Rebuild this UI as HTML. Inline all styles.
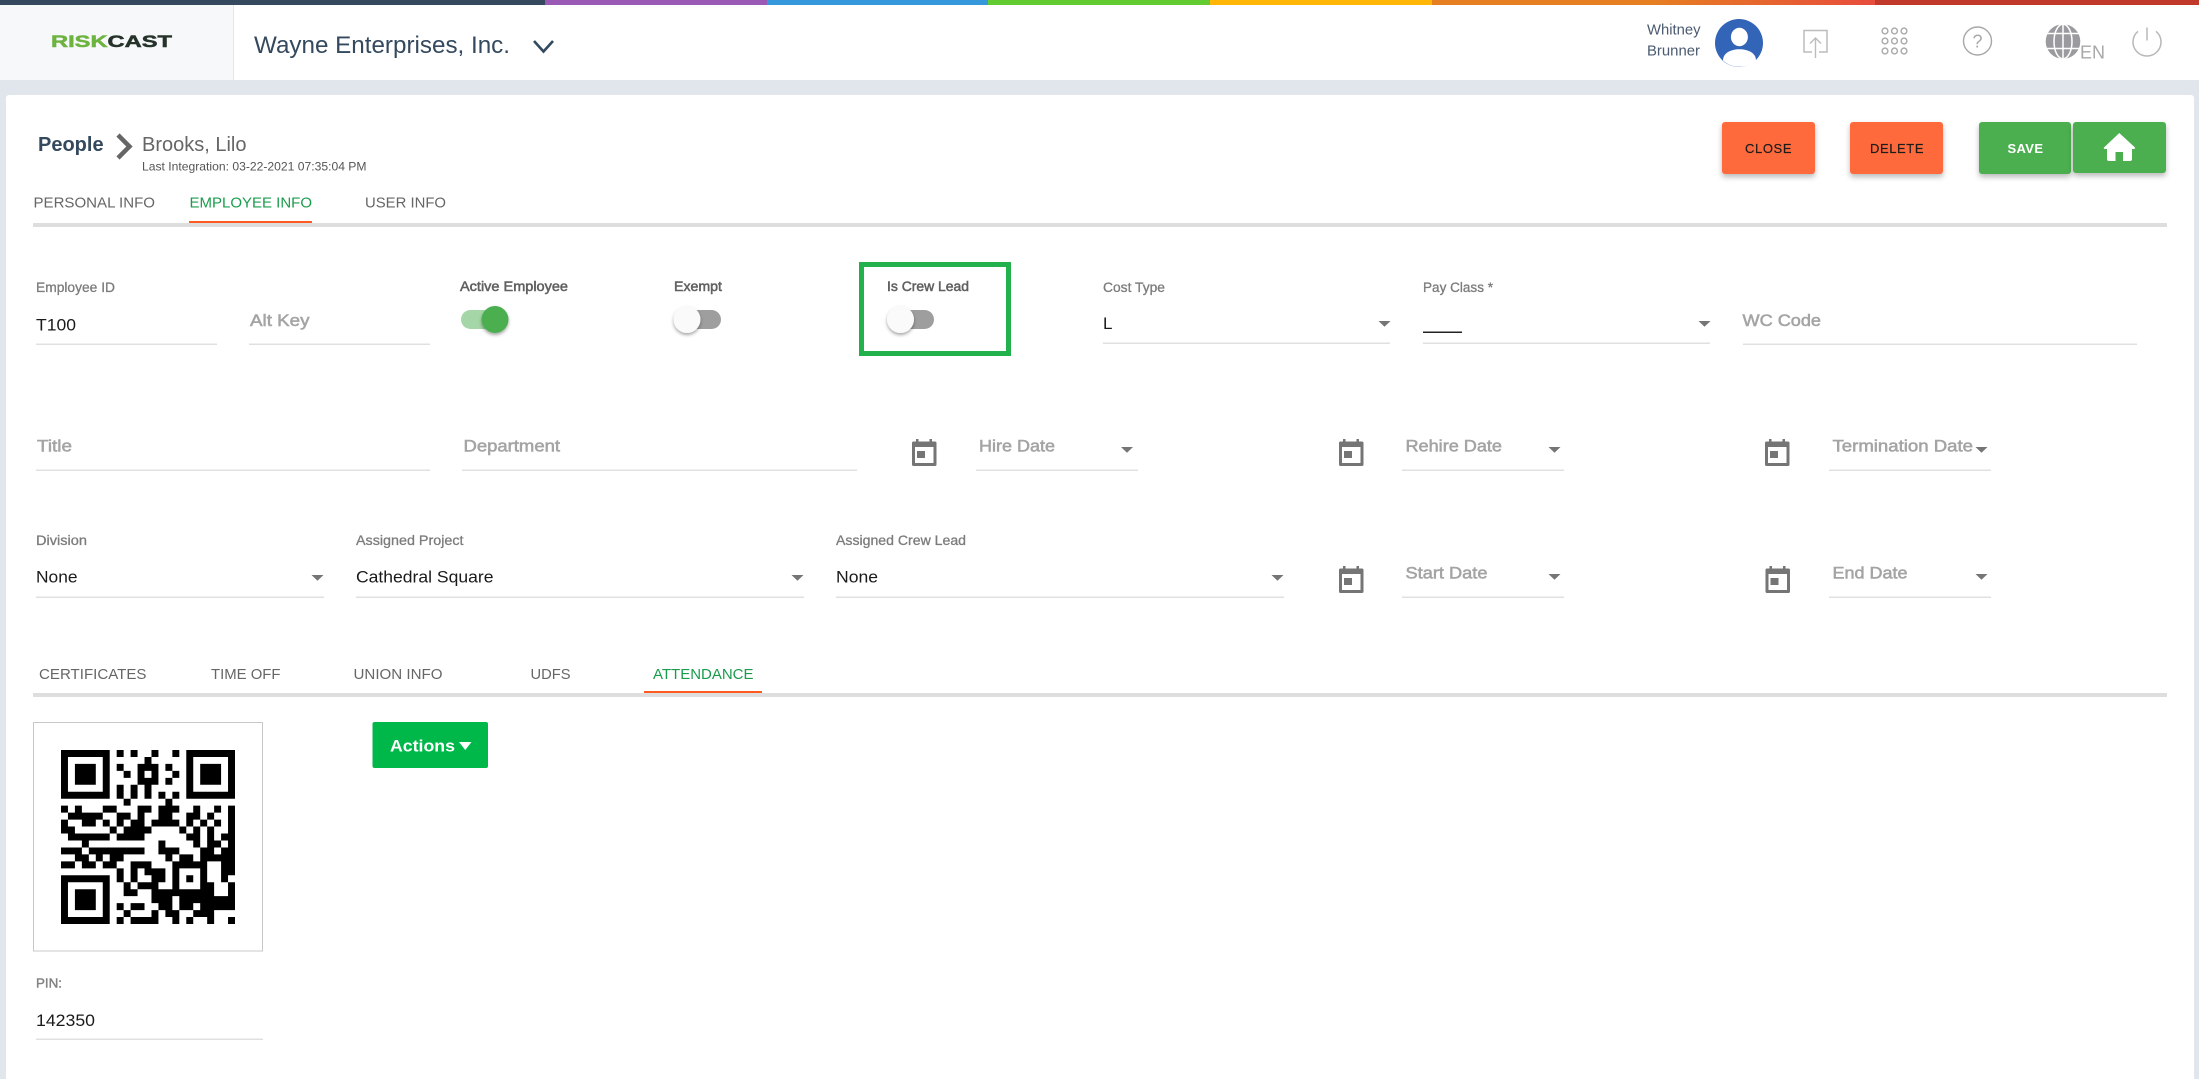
<!DOCTYPE html>
<html lang="en">
<head>
<meta charset="utf-8">
<title>RiskCast - People - Brooks, Lilo</title>
<style>
html,body{margin:0;padding:0;background:#e1e5ec;width:2199px;height:1079px;overflow:hidden}
svg{display:block}
text{font-family:"Liberation Sans",Arial,sans-serif;white-space:pre}
.lab{font-size:13.5px;fill:#7c7c7c;stroke:#7c7c7c;stroke-width:.3}
.lab2{font-size:13.5px;fill:#606060;stroke:#606060;stroke-width:.5}
.ph{font-size:17px;fill:#a4a4a4;stroke:#a4a4a4;stroke-width:.55}
.val{font-size:17px;fill:#1a1a1a}
.tab{font-size:15px;fill:#666}
.on{fill:#1a9c4c}
.line{fill:#e0e0e0}
.arr{fill:#757575}
.btn{font-size:13px;fill:#1c1c1c;stroke:#1c1c1c;stroke-width:.2}
</style>
</head>
<body>
<svg xmlns="http://www.w3.org/2000/svg" width="2199" height="1079" viewBox="0 0 2199 1079">
<defs>
<linearGradient id="og" x1="0" x2="1" y1="0" y2="0"><stop offset="0" stop-color="#e67e22"/><stop offset=".5" stop-color="#e67e22"/><stop offset="1" stop-color="#e74c3c"/></linearGradient>
<filter id="ts" x="-30%" y="-30%" width="160%" height="170%"><feDropShadow dx="0" dy="2" stdDeviation="1.5" flood-color="#000" flood-opacity=".35"/></filter>
<filter id="bs" x="-10%" y="-15%" width="120%" height="140%"><feDropShadow dx="0" dy="3" stdDeviation="3" flood-color="#000" flood-opacity=".28"/></filter>
<g id="cal" fill="#757575">
<path fill-rule="evenodd" d="M1.5 2.5h21.5a1.5 1.5 0 0 1 1.5 1.5v21.5a1.5 1.5 0 0 1-1.5 1.5h-21.5a1.5 1.5 0 0 1-1.5-1.5v-21.5a1.5 1.5 0 0 1 1.5-1.5zM3 8v16h18.5V8z"/>
<rect x="4" y="0" width="2.5" height="3"/><rect x="17.5" y="0" width="2.5" height="3"/>
<rect x="5" y="12" width="8" height="7"/>
</g>
<path id="ar" d="M.5 0h12l-6 5.800z" fill="#757575"/>
</defs>

<!-- page -->
<rect width="2199" height="1079" fill="#e1e5ec"/>

<!-- top colour bar -->
<rect x="0" y="0" width="545" height="5" fill="#34495e"/>
<rect x="545" y="0" width="222" height="5" fill="#9b59b6"/>
<rect x="767" y="0" width="221" height="5" fill="#3498db"/>
<rect x="988" y="0" width="222" height="5" fill="#62cb31"/>
<rect x="1210" y="0" width="222" height="5" fill="#ffb606"/>
<rect x="1432" y="0" width="443" height="5" fill="url(#og)"/>
<rect x="1875" y="0" width="324" height="5" fill="#c0392b"/>

<!-- header -->
<rect x="0" y="5" width="2199" height="75" fill="#fff"/>
<rect x="0" y="5" width="233" height="75" fill="#f7f8fa"/>
<rect x="233" y="5" width="1" height="75" fill="#e4e6ea"/>
<text x="51" y="47" font-size="16.7" font-weight="700" textLength="121" lengthAdjust="spacingAndGlyphs"><tspan fill="#6db33f" stroke="#6db33f" stroke-width=".5">RISK</tspan><tspan fill="#26332a" stroke="#26332a" stroke-width=".5">CAST</tspan></text>
<text x="254" y="53" font-size="24" fill="#34495e" textLength="256" lengthAdjust="spacingAndGlyphs">Wayne Enterprises, Inc.</text>
<path d="M534 41l9.500 10.500L553 41" fill="none" stroke="#34495e" stroke-width="2.600"/>

<text x="1647" y="34.500" font-size="14.500" fill="#4a5a70" textLength="53.500" lengthAdjust="spacingAndGlyphs">Whitney</text>
<text x="1647" y="55.500" font-size="14.500" fill="#4a5a70" textLength="53" lengthAdjust="spacingAndGlyphs">Brunner</text>
<circle cx="1739" cy="43" r="24" fill="#3264b8"/>
<ellipse cx="1739.400" cy="37" rx="8.500" ry="9.200" fill="#fff"/>
<path d="M1723 60.500C1723 53 1731 49.300 1739.500 49.300S1756 53 1756 60.500C1752 64.500 1746 66.800 1739.500 66.800S1727 64.500 1723 60.500z" fill="#fff"/>

<path d="M1812 52h-8V30.500h23V52h-8" fill="none" stroke="#bcbcbc" stroke-width="1.500"/>
<path d="M1815.500 58V38M1810 43.500l5.500-5.500 5.500 5.500" fill="none" stroke="#bcbcbc" stroke-width="1.400"/>

<g fill="none" stroke="#a8a8a8" stroke-width="1.400">
<circle cx="1885" cy="31" r="2.900"/><circle cx="1894.500" cy="31" r="2.900"/><circle cx="1904" cy="31" r="2.900"/>
<circle cx="1885" cy="41" r="2.900"/><circle cx="1894.500" cy="41" r="2.900"/><circle cx="1904" cy="41" r="2.900"/>
<circle cx="1885" cy="51" r="2.900"/><circle cx="1894.500" cy="51" r="2.900"/><circle cx="1904" cy="51" r="2.900"/>
<circle cx="1977.500" cy="41" r="14"/>
</g>
<text x="1972.500" y="47.500" font-size="18" fill="#a8a8a8">?</text>

<circle cx="2063" cy="41.500" r="17.300" fill="#9b9b9f"/>
<g fill="none" stroke="#fff" stroke-width="1.500">
<ellipse cx="2063" cy="41.500" rx="9" ry="17.300"/>
<path d="M2063 24v35M2046 33.500h34M2046 48.500h34"/>
</g>
<text x="2080" y="58.500" font-size="18" fill="#a8a8a8">EN</text>

<path d="M2138 31.300A14 14 0 1 0 2156 31.300" fill="none" stroke="#b8b8b8" stroke-width="1.500"/>
<path d="M2147 27.500V40.500" fill="none" stroke="#b8b8b8" stroke-width="1.500"/>

<!-- card -->
<path d="M9 95H2191a3 3 0 0 1 3 3V1079H6V98a3 3 0 0 1 3-3z" fill="#fff"/>

<!-- breadcrumb -->
<text x="38" y="151" font-size="20" font-weight="700" fill="#34495e">People</text>
<path d="M118 135l11.500 11.500-11.500 11.500" fill="none" stroke="#666" stroke-width="4.500"/>
<text x="142" y="151" font-size="20" fill="#666">Brooks, Lilo</text>
<text x="142" y="170.500" font-size="12" fill="#555" textLength="224.500" lengthAdjust="spacingAndGlyphs">Last Integration: 03-22-2021 07:35:04 PM</text>

<!-- action buttons -->
<rect x="1722" y="122" width="93" height="52" rx="3" fill="#ff6b3d" filter="url(#bs)"/>
<text class="btn" x="1745" y="153" textLength="46.500">CLOSE</text>
<rect x="1850" y="122" width="93" height="52" rx="3" fill="#ff6b3d" filter="url(#bs)"/>
<text class="btn" x="1870" y="153" textLength="53.500">DELETE</text>
<rect x="1979" y="122" width="92" height="52" rx="3" fill="#4caf50" filter="url(#bs)"/>
<text x="2007.500" y="153" font-size="13" font-weight="700" fill="#fff" textLength="35.500">SAVE</text>
<rect x="2073" y="122" width="93" height="51" rx="3" fill="#4caf50" filter="url(#bs)"/>
<path d="M2119.300 133L2135 147.500Q2135.500 149 2133.500 149H2132V159Q2132 161 2130 161H2123V152H2115.500V161H2109Q2107 161 2107 159V149H2105.500Q2103 149 2104 147.500z" fill="#fff"/>

<!-- main tabs -->
<text class="tab" x="33.500" y="207.500" textLength="121.500" lengthAdjust="spacingAndGlyphs">PERSONAL INFO</text>
<text class="tab on" x="189.500" y="207.500" textLength="122.500" lengthAdjust="spacingAndGlyphs">EMPLOYEE INFO</text>
<text class="tab" x="365" y="207.500" textLength="81" lengthAdjust="spacingAndGlyphs">USER INFO</text>
<rect x="33" y="223" width="2134" height="4" fill="#dedede"/>
<rect x="189" y="221" width="123" height="2" fill="#ff5a1f"/>

<!-- row 1 -->
<text class="lab" x="36" y="292" textLength="79" lengthAdjust="spacingAndGlyphs">Employee ID</text>
<text class="val" x="36" y="330.500" textLength="40" lengthAdjust="spacingAndGlyphs">T100</text>
<rect class="line" x="36" y="343.500" width="181" height="1.500"/>
<text class="ph" x="250" y="326" textLength="59.500" lengthAdjust="spacingAndGlyphs">Alt Key</text>
<rect class="line" x="249" y="343.500" width="181" height="1.500"/>

<text class="lab2" x="460" y="291" textLength="108" lengthAdjust="spacingAndGlyphs">Active Employee</text>
<rect x="461" y="310" width="46" height="19" rx="9.500" fill="#a5d6a7"/>
<circle cx="495" cy="319.500" r="13.500" fill="#4caf50" filter="url(#ts)"/>

<text class="lab2" x="674" y="291" textLength="48" lengthAdjust="spacingAndGlyphs">Exempt</text>
<rect x="680" y="310" width="41" height="19" rx="9.500" fill="#9e9e9e"/>
<circle cx="687" cy="319.500" r="13.500" fill="#fafafa" filter="url(#ts)"/>

<rect x="861.500" y="264.500" width="147" height="89" fill="none" stroke="#22b14c" stroke-width="5"/>
<text class="lab2" x="887" y="291" textLength="82" lengthAdjust="spacingAndGlyphs">Is Crew Lead</text>
<rect x="893" y="310" width="41" height="19" rx="9.500" fill="#9e9e9e"/>
<circle cx="900.500" cy="319.500" r="13.500" fill="#fafafa" filter="url(#ts)"/>

<text class="lab" x="1103" y="292" textLength="62" lengthAdjust="spacingAndGlyphs">Cost Type</text>
<text class="val" x="1103" y="329">L</text>
<use href="#ar" x="1378" y="321"/>
<rect class="line" x="1103" y="342.500" width="287" height="1.500"/>

<text class="lab" x="1423" y="292" textLength="70" lengthAdjust="spacingAndGlyphs">Pay Class *</text>
<rect x="1423" y="331.500" width="39" height="1.500" fill="#222"/>
<use href="#ar" x="1698" y="321"/>
<rect class="line" x="1423" y="342.500" width="287" height="1.500"/>

<text class="ph" x="1742.500" y="326" textLength="78.500" lengthAdjust="spacingAndGlyphs">WC Code</text>
<rect class="line" x="1743" y="343.500" width="394" height="1.500"/>

<!-- row 2 -->
<text class="ph" x="37" y="451.500" textLength="35" lengthAdjust="spacingAndGlyphs">Title</text>
<rect class="line" x="36" y="469.500" width="394" height="1.500"/>
<text class="ph" x="463.500" y="451.500" textLength="96.500" lengthAdjust="spacingAndGlyphs">Department</text>
<rect class="line" x="462" y="469.500" width="395" height="1.500"/>

<use href="#cal" x="912" y="439"/>
<text class="ph" x="979" y="451.500" textLength="76" lengthAdjust="spacingAndGlyphs">Hire Date</text>
<use href="#ar" x="1120.500" y="447"/>
<rect class="line" x="976" y="469.500" width="162" height="1.500"/>

<use href="#cal" x="1339" y="439"/>
<text class="ph" x="1405.500" y="451.500" textLength="96.500" lengthAdjust="spacingAndGlyphs">Rehire Date</text>
<use href="#ar" x="1548" y="447"/>
<rect class="line" x="1402" y="469.500" width="162" height="1.500"/>

<use href="#cal" x="1765" y="439"/>
<text class="ph" x="1832.500" y="451.500" textLength="140.500" lengthAdjust="spacingAndGlyphs">Termination Date</text>
<use href="#ar" x="1975" y="447"/>
<rect class="line" x="1829" y="469.500" width="162" height="1.500"/>

<!-- row 3 -->
<text class="lab" x="36" y="545" textLength="51" lengthAdjust="spacingAndGlyphs">Division</text>
<text class="val" x="36" y="582.500" textLength="41.500" lengthAdjust="spacingAndGlyphs">None</text>
<use href="#ar" x="311" y="575"/>
<rect class="line" x="36" y="596.500" width="288" height="1.500"/>

<text class="lab" x="356" y="545" textLength="107.500" lengthAdjust="spacingAndGlyphs">Assigned Project</text>
<text class="val" x="356" y="582.500" textLength="137.500" lengthAdjust="spacingAndGlyphs">Cathedral Square</text>
<use href="#ar" x="791" y="575"/>
<rect class="line" x="356" y="596.500" width="448" height="1.500"/>

<text class="lab" x="836" y="545" textLength="130" lengthAdjust="spacingAndGlyphs">Assigned Crew Lead</text>
<text class="val" x="836" y="582.500" textLength="42" lengthAdjust="spacingAndGlyphs">None</text>
<use href="#ar" x="1271" y="575"/>
<rect class="line" x="836" y="596.500" width="448" height="1.500"/>

<use href="#cal" x="1339" y="566"/>
<text class="ph" x="1405.500" y="578.500" textLength="82" lengthAdjust="spacingAndGlyphs">Start Date</text>
<use href="#ar" x="1548" y="574"/>
<rect class="line" x="1402" y="596.500" width="162" height="1.500"/>

<use href="#cal" x="1765.500" y="566"/>
<text class="ph" x="1832.500" y="578.500" textLength="75" lengthAdjust="spacingAndGlyphs">End Date</text>
<use href="#ar" x="1975" y="574"/>
<rect class="line" x="1829" y="596.500" width="162" height="1.500"/>

<!-- sub tabs -->
<text class="tab" x="39" y="679" textLength="107.500" lengthAdjust="spacingAndGlyphs">CERTIFICATES</text>
<text class="tab" x="211" y="679" textLength="69.500" lengthAdjust="spacingAndGlyphs">TIME OFF</text>
<text class="tab" x="353.500" y="679" textLength="89" lengthAdjust="spacingAndGlyphs">UNION INFO</text>
<text class="tab" x="530.500" y="679" textLength="40" lengthAdjust="spacingAndGlyphs">UDFS</text>
<text class="tab on" x="653" y="679" textLength="100.500" lengthAdjust="spacingAndGlyphs">ATTENDANCE</text>
<rect x="33" y="693" width="2134" height="4" fill="#dedede"/>
<rect x="644" y="691" width="118" height="2" fill="#ff5a1f"/>

<!-- QR -->
<rect x="33.500" y="722.500" width="229" height="228.500" fill="#fff" stroke="#c8c8c8" stroke-width="1"/>
<svg x="61" y="750" width="174" height="174" viewBox="0 0 25 25">
<path fill="#000" fill-rule="evenodd" d="M0 0h7v7h-7zM1 1v5h5v-5zM2 2h3v3h-3zM18 0h7v7h-7zM19 1v5h5v-5zM20 2h3v3h-3zM0 18h7v7h-7zM1 19v5h5v-5zM2 20h3v3h-3z
M8 0h1v1h-1zM10 0h1v1h-1zM13 0h1v1h-1zM16 0h1v1h-1z
M12 1h1v1h-1z
M8 2h1v1h-1zM11 2h3v1h-3zM15 2h1v1h-1z
M9 3h1v1h-1zM11 3h1v1h-1zM13 3h1v1h-1zM16 3h1v1h-1z
M11 4h3v1h-3zM15 4h1v1h-1z
M8 5h1v1h-1zM10 5h1v1h-1zM12 5h1v1h-1z
M8 6h1v1h-1zM10 6h1v1h-1zM12 6h1v1h-1zM14 6h1v1h-1zM16 6h1v1h-1z
M9 7h1v1h-1zM15 7h1v1h-1z
M0 8h1v1h-1zM2 8h1v1h-1zM6 8h2v1h-2zM11 8h2v1h-2zM14 8h3v1h-3zM19 8h1v1h-1zM22 8h1v1h-1zM24 8h1v1h-1z
M1 9h5v1h-5zM8 9h2v1h-2zM11 9h1v1h-1zM14 9h2v1h-2zM18 9h2v1h-2zM21 9h1v1h-1zM24 9h1v1h-1z
M0 10h1v1h-1zM3 10h2v1h-2zM6 10h1v1h-1zM8 10h1v1h-1zM10 10h2v1h-2zM13 10h4v1h-4zM18 10h1v1h-1zM20 10h1v1h-1zM22 10h1v1h-1zM24 10h1v1h-1z
M0 11h2v1h-2zM7 11h1v1h-1zM9 11h4v1h-4zM17 11h1v1h-1zM19 11h1v1h-1zM21 11h1v1h-1zM24 11h1v1h-1z
M1 12h6v1h-6zM8 12h4v1h-4zM18 12h2v1h-2zM21 12h1v1h-1zM23 12h2v1h-2z
M3 13h1v1h-1zM14 13h1v1h-1zM19 13h1v1h-1zM21 13h2v1h-2zM24 13h1v1h-1z
M0 14h3v1h-3zM4 14h8v1h-8zM14 14h3v1h-3zM20 14h2v1h-2zM23 14h2v1h-2z
M2 15h2v1h-2zM5 15h1v1h-1zM7 15h2v1h-2zM15 15h1v1h-1zM17 15h2v1h-2zM20 15h5v1h-5z
M0 16h2v1h-2zM3 16h2v1h-2zM6 16h2v1h-2zM10 16h3v1h-3zM16 16h5v1h-5zM23 16h2v1h-2z
M8 17h1v1h-1zM10 17h1v1h-1zM12 17h3v1h-3zM16 17h1v1h-1zM20 17h1v1h-1zM23 17h2v1h-2z
M8 18h1v1h-1zM10 18h1v1h-1zM13 18h2v1h-2zM16 18h1v1h-1zM18 18h1v1h-1zM20 18h1v1h-1zM23 18h1v1h-1z
M9 19h1v1h-1zM11 19h3v1h-3zM16 19h1v1h-1zM20 19h2v1h-2zM24 19h1v1h-1z
M9 20h2v1h-2zM13 20h8v1h-8zM21 20h1v1h-1zM24 20h1v1h-1z
M13 21h3v1h-3zM17 21h8v1h-8z
M8 22h1v1h-1zM10 22h2v1h-2zM14 22h2v1h-2zM17 22h2v1h-2zM20 22h5v1h-5z
M9 23h1v1h-1zM13 23h1v1h-1zM15 23h2v1h-2zM19 23h3v1h-3z
M8 24h1v1h-1zM10 24h4v1h-4zM16 24h1v1h-1zM18 24h1v1h-1zM21 24h1v1h-1zM24 24h1v1h-1z"/>
</svg>

<!-- actions -->
<rect x="372.500" y="722" width="115.500" height="46" rx="2" fill="#00b84a"/>
<text x="390" y="751.500" font-size="17" font-weight="700" fill="#fff" textLength="65" lengthAdjust="spacingAndGlyphs">Actions</text>
<path d="M459 742h12.500l-6.250 8z" fill="#fff"/>

<!-- pin -->
<text x="36" y="987.500" font-size="13" fill="#808080" stroke="#808080" stroke-width=".4" textLength="26" lengthAdjust="spacingAndGlyphs">PIN:</text>
<text class="val" x="36" y="1026" textLength="59" lengthAdjust="spacingAndGlyphs">142350</text>
<rect class="line" x="36" y="1038.500" width="227" height="1.500"/>
</svg>
</body>
</html>
